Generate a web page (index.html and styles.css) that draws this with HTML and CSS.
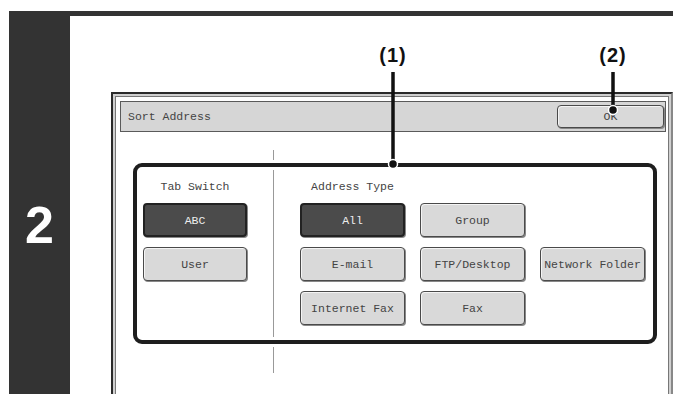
FILE: index.html
```html
<!DOCTYPE html>
<html lang="en">
<head>
  <meta charset="UTF-8">
  <title>Sort Address</title>
  <link rel="stylesheet" href="styles.css">
</head>
<body>
  <div class="step">
    <div class="step-num">2</div>
    <div class="step-body">
      <div class="window">
        <div class="title-bar">
          <span class="title">Sort Address</span>
          <button class="key ok">OK</button>
        </div>
        <div class="group">
          <div class="col tabs">
            <div class="col-label">Tab Switch</div>
            <div class="keys">
              <button class="key on">ABC</button>
              <button class="key">User</button>
            </div>
          </div>
          <div class="col types">
            <div class="col-label">Address Type</div>
            <div class="keys grid">
              <button class="key on">All</button>
              <button class="key">Group</button>
              <button class="key row-start">E-mail</button>
              <button class="key">FTP/Desktop</button>
              <button class="key">Network Folder</button>
              <button class="key">Internet Fax</button>
              <button class="key">Fax</button>
            </div>
          </div>
        </div>
      </div>
    </div>
  </div>

  <!-- callout leaders drawn over the screen -->
  <div class="callouts">
    <svg width="673" height="394" viewBox="0 0 673 394">
      <line x1="393" y1="72" x2="393" y2="164" stroke="#111" stroke-width="3.5"/>
      <circle cx="393" cy="164" r="4.5" fill="#111" stroke="#fff" stroke-width="1.5"/>
      <line x1="613" y1="72" x2="613" y2="110" stroke="#111" stroke-width="3.5"/>
      <circle cx="613" cy="110" r="4.5" fill="#111" stroke="#fff" stroke-width="1.5"/>
    </svg>
    <span class="callout c1">(1)</span>
    <span class="callout c2">(2)</span>
  </div>
</body>
</html>
```

FILE: styles.css
```css
body {
  margin: 0;
  height: 394px;
  overflow: hidden;
  background: #fff;
  font-family: "Liberation Mono", "Courier New", monospace;
  color: #444;
}
.step {
  display: flex;
  margin: 11px 0 0 9px;
  height: 383px;
  overflow: hidden;
}
.step-num {
  width: 61px;
  flex-shrink: 0;
  background: #333;
  color: #fff;
  font: bold 52px/52px "Liberation Sans", Arial, sans-serif;
  text-align: center;
  padding-top: 188px;
}
.step-body {
  flex: 1;
  border-top: 5px solid #333;
  padding: 76px 0 0 41px;
}
.window {
  height: 330px;
  border: 2px solid #2b2b2b;
  border-right-color: #888;
  box-shadow: inset 0 0 0 2px #d0d0d0, inset 0 0 0 3px #777;
  padding: 7px 5px 0 7px;
}
.title-bar {
  box-sizing: border-box;
  height: 31px;
  display: flex;
  align-items: center;
  justify-content: space-between;
  background: #d6d6d6;
  border: 1px solid #5a5a5a;
  padding: 0 1px 0 7px;
  font-size: 11.5px;
}
.key {
  font-family: inherit;
  font-size: 11.5px;
  color: #444;
  background: #d9d9d9;
  border: 1px solid #4a4a4a;
  border-radius: 4px;
  box-shadow: 1px 1px 0 #888, inset 1px 1px 0 #f4f4f4;
  padding: 0;
  width: 104px;
  height: 34px;
}
.key.on {
  background: #4b4b4b;
  color: #eee;
  border: 2px solid #222;
  box-shadow: 1px 1px 0 #888;
}
.key.ok {
  width: 107px;
  height: 23px;
}
.group {
  box-sizing: border-box;
  width: 524px;
  height: 181px;
  margin: 31px 0 0 13px;
  border: 4px solid #1e1e1e;
  border-radius: 9px;
  display: flex;
  font-size: 11.5px;
}
.col {
  margin: 3px 0;
  padding-top: 9px;
}
.col-label {
  line-height: 16px;
  text-align: center;
  margin-bottom: 8px;
}
.tabs {
  width: 130px;
  padding-left: 6px;
}
.tabs .col-label {
  width: 104px;
}
.types {
  position: relative;
  border-left: 1px solid #999;
  padding-left: 26px;
}
.types .col-label {
  width: 105px;
}
.types::before,
.types::after {
  content: "";
  position: absolute;
  left: -1px;
  width: 1px;
  background: #999;
}
.types::before {
  top: -20px;
  height: 10px;
}
.types::after {
  top: calc(100% + 10px);
  height: 26px;
}
.keys {
  display: flex;
  flex-direction: column;
  gap: 10px;
}
.grid {
  display: grid;
  grid-template-columns: repeat(3, 105px);
  column-gap: 15px;
  row-gap: 10px;
}
.grid .key {
  width: 105px;
}
.row-start {
  grid-column: 1;
}
.callouts {
  position: absolute;
  top: 0;
  left: 0;
  width: 673px;
  height: 394px;
}
.callouts svg {
  display: block;
}
.callout {
  position: absolute;
  top: 45px;
  transform: translateX(-50%);
  font: bold 20px/20px "Liberation Sans", Arial, sans-serif;
  letter-spacing: 1px;
  color: #111;
}
.c1 { left: 393px; }
.c2 { left: 613px; }
```
